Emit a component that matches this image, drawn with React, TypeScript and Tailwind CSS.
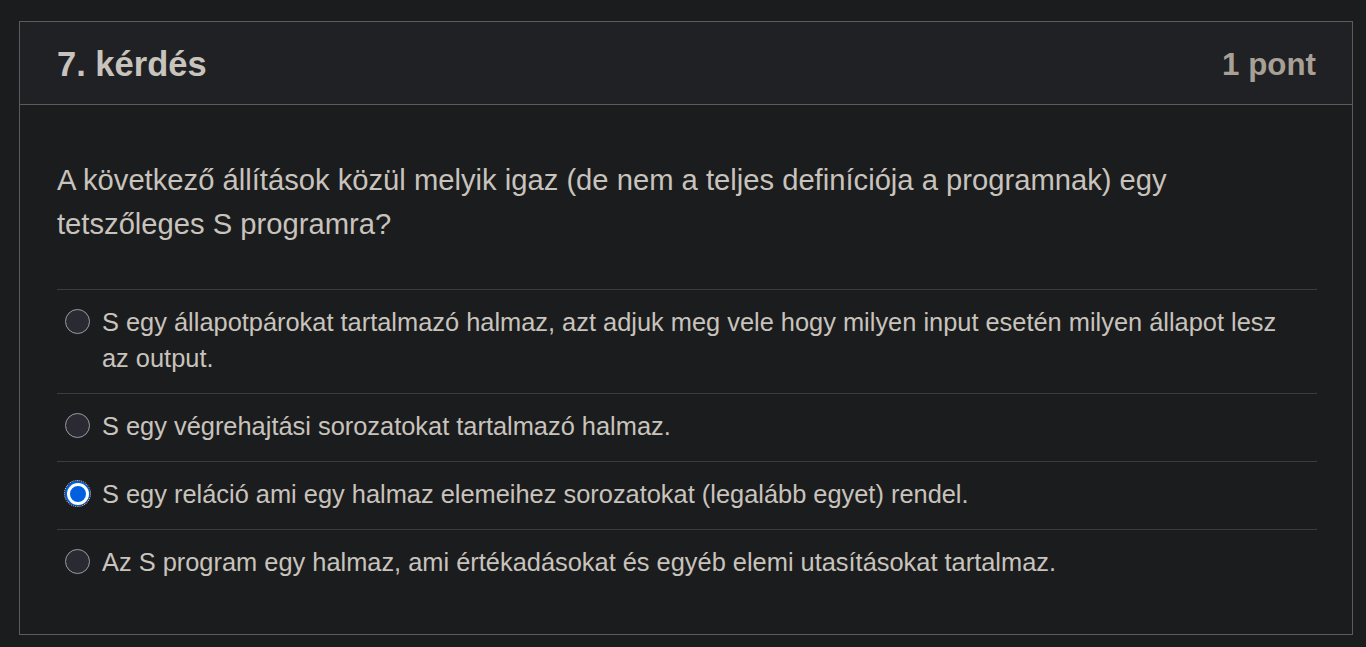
const options = [
  { text: 'S egy állapotpárokat tartalmazó halmaz, azt adjuk meg vele hogy milyen input esetén milyen állapot lesz az output.', checked: false },
  { text: 'S egy végrehajtási sorozatokat tartalmazó halmaz.', checked: false },
  { text: 'S egy reláció ami egy halmaz elemeihez sorozatokat (legalább egyet) rendel.', checked: true },
  { text: 'Az S program egy halmaz, ami értékadásokat és egyéb elemi utasításokat tartalmaz.', checked: false },
];

function Radio({ checked }: { checked: boolean }) {
  if (checked) {
    return (
      <span className="mt-[5px] ml-[8px] flex h-[25px] w-[25px] shrink-0 items-center justify-center rounded-full bg-[#0060df] outline-1 outline-dotted outline-offset-0 outline-[#d0d0d0]">
        <span className="h-[22px] w-[22px] rounded-full border-[3px] border-white bg-[#0060df]" />
      </span>
    );
  }
  return (
    <span className="mt-[5px] ml-[8px] h-[25px] w-[25px] shrink-0 rounded-full border-[1.5px] border-[#9a9aa4] bg-[#2b2a33]" />
  );
}

export default function App() {
  return (
    <div
      className="min-h-[647px] bg-[#1b1c1e] pt-[21px] pb-[12px] pl-[19px] pr-[13px]"
      style={{ fontFamily: '"Liberation Sans", Arial, sans-serif' }}
    >
      <div className="border border-[#5b5b5b]">
        <div className="flex h-[83px] items-center justify-between border-b border-[#5b5b5b] bg-[#202124] pt-[4px] pl-[37px] pr-[36px]">
          <h2 className="text-[34.5px] font-bold text-[#c8c3bc]">7. kérdés</h2>
          <span className="text-[31.3px] font-bold text-[#a8a095]">1 pont</span>
        </div>
        <div className="bg-[#1b1c1e] pl-[37px] pr-[35px] pt-[53px] pb-[37px]">
          <p className="text-[29.2px] leading-[44px] text-[#c8c3bc]">
            A következő állítások közül melyik igaz (de nem a teljes definíciója a programnak) egy tetszőleges S programra?
          </p>
          <div className="mt-[43px]">
            {options.map((o, i) => (
              <label key={i} className="flex gap-[12px] border-t border-[#3a3c3e] pt-[14px] pb-[17px] pr-[20px]">
                <Radio checked={o.checked} />
                <span className="text-[25.4px] leading-[36px] text-[#c8c3bc]">{o.text}</span>
              </label>
            ))}
          </div>
        </div>
      </div>
    </div>
  );
}
